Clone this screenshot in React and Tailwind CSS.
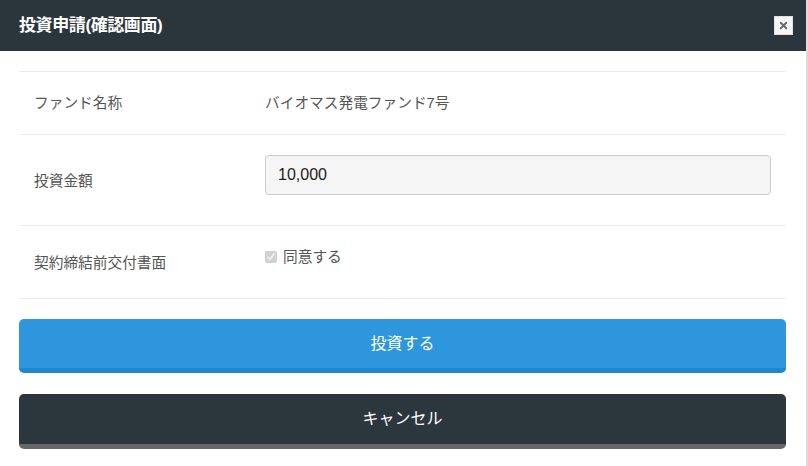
import React from 'react';
import { X } from 'lucide-react';

const font = { fontFamily: '"Liberation Sans", "Noto Sans CJK JP", sans-serif' };

const App = () => {
  return (
    <div className="flex w-[808px] h-[466px] bg-white overflow-hidden" style={font}>
      <div className="w-[806px] flex flex-col">
        {/* Header */}
        <div className="h-[51px] bg-[#2b353c] flex items-center justify-between pl-[19px] pr-[13px]">
          <h1 className="text-white font-bold text-[17px] tracking-[-0.4px]">投資申請(確認画面)</h1>
          <button className="w-[19px] h-[19px] bg-[#f7f7f7] border border-[#e2e2e2] flex items-center justify-center">
            <X size={11} strokeWidth={4} color="#666" />
          </button>
        </div>

        {/* Body */}
        <div className="px-[19px] pt-[20px] pr-[20px]">
          <div className="border-t border-[#ebebeb]">
            <div className="flex items-center h-[63px] border-b border-[#ebebeb] text-[14.7px] text-[#555]">
              <div className="w-[246px] pl-[15px]">ファンド名称</div>
              <div>バイオマス発電ファンド7号</div>
            </div>
            <div className="flex items-start h-[91px] border-b border-[#ebebeb] text-[14.7px] text-[#555]">
              <div className="w-[246px] pl-[15px] pt-[35px]">投資金額</div>
              <div className="mt-[20px] w-[506px] h-[40px] bg-[#f5f5f5] border border-[#cccccc] rounded-[4px] flex items-center pl-[12px] text-[16px] text-[#222]">
                10,000
              </div>
            </div>
            <div className="flex items-start h-[73px] border-b border-[#ebebeb] text-[14.7px] text-[#555]">
              <div className="w-[246px] pl-[15px] pt-[26px]">契約締結前交付書面</div>
              <label className="pt-[20px] flex items-center gap-[6px]">
                <input type="checkbox" checked disabled readOnly className="w-[12px] h-[12px] m-0" />
                <span>同意する</span>
              </label>
            </div>
          </div>

          {/* Buttons */}
          <button className="mt-[20px] w-full h-[54px] bg-[#2e96dd] border-b-[5px] border-[#1e87cd] rounded-[5px] text-white text-[16px]">
            投資する
          </button>
          <button className="mt-[21px] w-full h-[55px] bg-[#2c363d] border-b-[5px] border-[#666666] rounded-[5px] text-white text-[16px]">
            キャンセル
          </button>
        </div>
      </div>
      <div className="w-[2px] h-full bg-[#dcdcdc]"></div>
    </div>
  );
};

export default App;
